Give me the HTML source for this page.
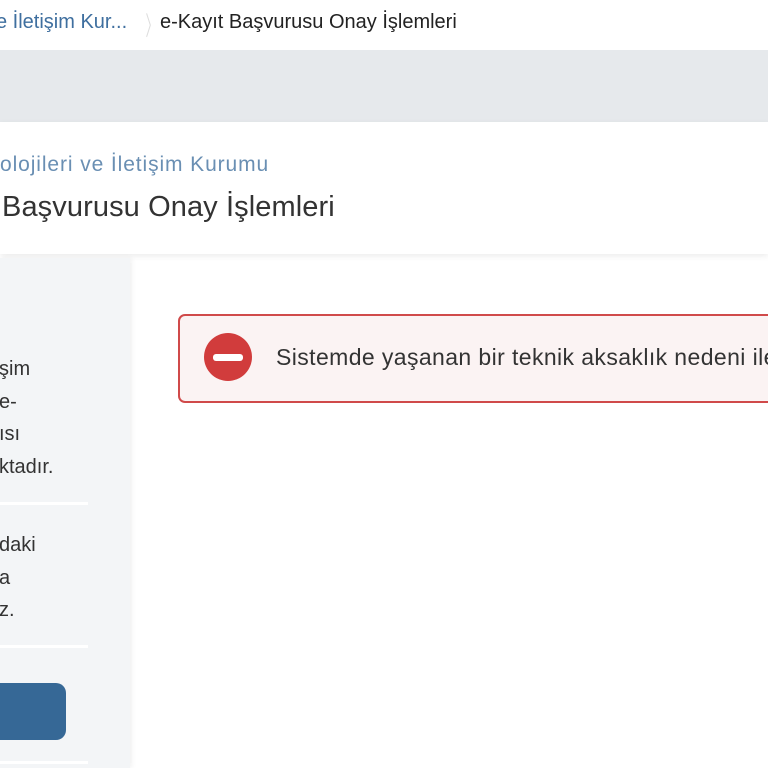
<!DOCTYPE html>
<html><head><meta charset="utf-8"><style>
body{margin:0;width:768px;height:768px;overflow:hidden;background:#fff;font-family:"Liberation Sans",sans-serif;position:relative}
.a{position:absolute;white-space:nowrap}
</style></head><body>
<div class="a" style="left:0;top:0;width:768px;height:50px;background:#fff"></div>
<div class="a" style="left:-4px;top:11px;font-size:20px;color:#3f6f9f">e İletişim Kur...</div>
<div class="a" style="left:139px;top:6px;font-size:26px;color:#ddd;transform:scaleX(.5)">〉</div>
<div class="a" style="left:160px;top:11px;font-size:20px;color:#222">e-Kayıt Başvurusu Onay İşlemleri</div>
<div class="a" style="left:0;top:50px;width:768px;height:72px;background:#e6e9ec"></div>
<div class="a" style="left:0;top:122px;width:768px;height:132px;background:#fff;box-shadow:0 2px 6px rgba(0,0,0,.08)"></div>
<div class="a" style="left:0;top:153px;font-size:21px;letter-spacing:0.9px;color:#6a8fb3;font-weight:300">olojileri ve İletişim Kurumu</div>
<div class="a" style="left:2px;top:191px;font-size:29px;letter-spacing:0.1px;color:#333">Başvurusu Onay İşlemleri</div>
<div class="a" style="left:0;top:258px;width:130px;height:510px;background:#f3f5f7;box-shadow:2px 0 5px rgba(0,0,0,.06)"></div>
<div class="a" style="left:-1px;top:353px;font-size:20px;line-height:32.7px;color:#333">şim<br>e-<br>ısı<br>ktadır.</div>
<div class="a" style="left:0;top:502px;width:88px;height:3px;background:#fff"></div>
<div class="a" style="left:-1px;top:529px;font-size:20px;line-height:32.7px;color:#333">daki<br>a<br>z.</div>
<div class="a" style="left:0;top:645px;width:88px;height:3px;background:#fff"></div>
<div class="a" style="left:-12px;top:683px;width:78px;height:57px;background:#366896;border-radius:10px"></div>
<div class="a" style="left:0;top:761px;width:88px;height:3px;background:#fff"></div>
<div class="a" style="left:178px;top:314px;width:620px;height:85px;border:2px solid #d04a4a;border-radius:7px;background:#fbf3f3"></div>
<div class="a" style="left:204px;top:333px;width:48px;height:48px;border-radius:50%;background:#d13c3c"></div>
<div class="a" style="left:213px;top:354px;width:30px;height:7px;border-radius:3px;background:#fff"></div>
<div class="a" style="left:276px;top:344px;font-size:23px;letter-spacing:0.4px;color:#333">Sistemde yaşanan bir teknik aksaklık nedeni ile</div>
</body></html>
